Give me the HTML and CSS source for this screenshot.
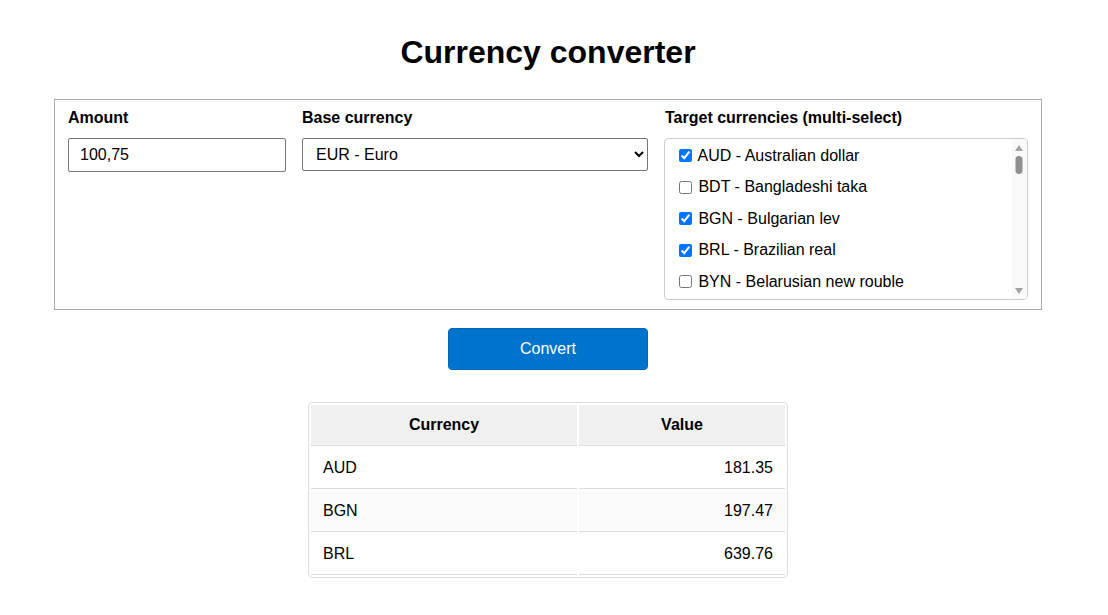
FILE: index.html
```html
<!DOCTYPE html>
<html lang="en">
<head>
<meta charset="utf-8">
<title>Currency converter</title>
<link rel="stylesheet" href="styles.css">
</head>
<body>
<main class="page">
  <h1 class="title">Currency converter</h1>
  <form class="panel">
    <div class="field">
      <label class="label" for="amount">Amount</label>
      <input class="text-input" id="amount" type="text" value="100,75">
    </div>
    <div class="field">
      <label class="label" for="base">Base currency</label>
      <select class="select" id="base">
        <option>EUR - Euro</option>
      </select>
    </div>
    <div class="field">
      <span class="label label-target">Target currencies (multi-select)</span>
      <div class="listbox-wrap">
        <div class="listbox">
          <label class="opt"><input type="checkbox" checked> AUD - Australian dollar</label>
          <label class="opt"><input type="checkbox"> BDT - Bangladeshi taka</label>
          <label class="opt"><input type="checkbox" checked> BGN - Bulgarian lev</label>
          <label class="opt"><input type="checkbox" checked> BRL - Brazilian real</label>
          <label class="opt"><input type="checkbox"> BYN - Belarusian new rouble</label>
          <label class="opt"><input type="checkbox"> CAD - Canadian dollar</label>
          <label class="opt"><input type="checkbox"> CHF - Swiss franc</label>
          <label class="opt"><input type="checkbox"> CLP - Chilean peso</label>
          <label class="opt"><input type="checkbox"> CNY - Chinese yuan renminbi</label>
          <label class="opt"><input type="checkbox"> COP - Colombian peso</label>
          <label class="opt"><input type="checkbox"> CZK - Czech koruna</label>
          <label class="opt"><input type="checkbox"> DKK - Danish krone</label>
          <label class="opt"><input type="checkbox"> GBP - Pound sterling</label>
          <label class="opt"><input type="checkbox"> HKD - Hong Kong dollar</label>
          <label class="opt"><input type="checkbox"> HUF - Hungarian forint</label>
          <label class="opt"><input type="checkbox"> INR - Indian rupee</label>
          <label class="opt"><input type="checkbox"> JPY - Japanese yen</label>
          <label class="opt"><input type="checkbox"> USD - US dollar</label>
        </div>
        <div class="scrollbar" aria-hidden="true">
          <svg width="15" height="160" viewBox="0 0 15 160">
            <polygon points="3,12 11,12 7,6" fill="#a3a3a3"/>
            <rect x="3.5" y="17" width="7" height="18" rx="3.5" fill="#8f8f8f"/>
            <polygon points="3,149 11,149 7,155" fill="#a3a3a3"/>
          </svg>
        </div>
      </div>
    </div>
  </form>
  <div class="actions">
    <button class="btn" type="button">Convert</button>
  </div>
  <table class="results">
    <thead>
      <tr><th>Currency</th><th>Value</th></tr>
    </thead>
    <tbody>
      <tr><td>AUD</td><td class="num">181.35</td></tr>
      <tr><td>BGN</td><td class="num">197.47</td></tr>
      <tr><td>BRL</td><td class="num">639.76</td></tr>
    </tbody>
  </table>
</main>
</body>
</html>
```

FILE: styles.css
```css
html, body {
  margin: 0;
  padding: 0;
  background: #fff;
}
body {
  font-family: Arial, "Liberation Sans", Helvetica, sans-serif;
  font-size: 16px;
  color: #000;
}
.page {
  width: 988px;
  margin-left: 54px;
}
.title {
  font-size: 32px;
  font-weight: bold;
  text-align: center;
  line-height: 37px;
  margin: 34px 0 28px;
}
.panel {
  border: 1px solid #aaa;
  padding: 9px 12px 9px 13px;
  display: grid;
  grid-template-columns: 218px 346px 364px;
  column-gap: 16px;
  align-items: start;
}
.field {
  display: flex;
  flex-direction: column;
}
.label {
  font-weight: bold;
  line-height: 18px;
  margin-bottom: 11px;
}
.label-target {
  padding-left: 1px;
}
.text-input {
  box-sizing: border-box;
  height: 34px;
  width: 100%;
  border: 1px solid #767676;
  border-radius: 2px;
  padding: 0 11px;
  font: 16px Arial, "Liberation Sans", sans-serif;
  margin: 0;
}
.select {
  box-sizing: border-box;
  height: 33px;
  width: 100%;
  border: 1px solid #767676;
  border-radius: 2px;
  padding: 0 9px;
  font: 16px Arial, "Liberation Sans", sans-serif;
  background: #fff;
  margin: 0;
}
.listbox-wrap {
  position: relative;
  height: 162px;
}
.listbox {
  box-sizing: border-box;
  height: 162px;
  border: 1px solid #ccc;
  border-radius: 4px;
  overflow-y: scroll;
  scrollbar-width: none;
  padding: 1px 16px 2px 0;
}
.listbox::-webkit-scrollbar {
  display: none;
}
.scrollbar {
  position: absolute;
  top: 1px;
  right: 1px;
  width: 15px;
  height: 160px;
  background: #f9f9f9;
  border-radius: 0 3px 3px 0;
}
.scrollbar svg {
  display: block;
}
.opt {
  display: flex;
  align-items: center;
  height: 31.5px;
  padding-left: 10px;
  white-space: pre;
  line-height: 18px;
}
.opt input {
  margin: 0 2px 0 4px;
  width: 13px;
  height: 13px;
}
.actions {
  display: flex;
  justify-content: center;
  margin-top: 18px;
}
.btn {
  width: 200px;
  height: 42px;
  background: #0074cc;
  color: #fff;
  border: 1px solid #0068b8;
  border-radius: 4px;
  font: 16px Arial, "Liberation Sans", sans-serif;
  cursor: pointer;
}
.results {
  margin: 32px auto 0;
  width: 480px;
  border: 1px solid #ddd;
  border-radius: 4px;
  border-spacing: 2px;
}
.results th {
  background: #f0f0f0;
  font-weight: bold;
  height: 40px;
  padding: 0 12px;
  border-bottom: 1px solid #ddd;
  text-align: center;
}
.results td {
  height: 40px;
  padding: 0 12px;
  border-bottom: 1px solid #ddd;
}
.results th:first-child,
.results td:first-child {
  width: 242px;
}
.results tbody tr:nth-child(even) td {
  background: #fafafa;
}
.results .num {
  text-align: right;
}
```
